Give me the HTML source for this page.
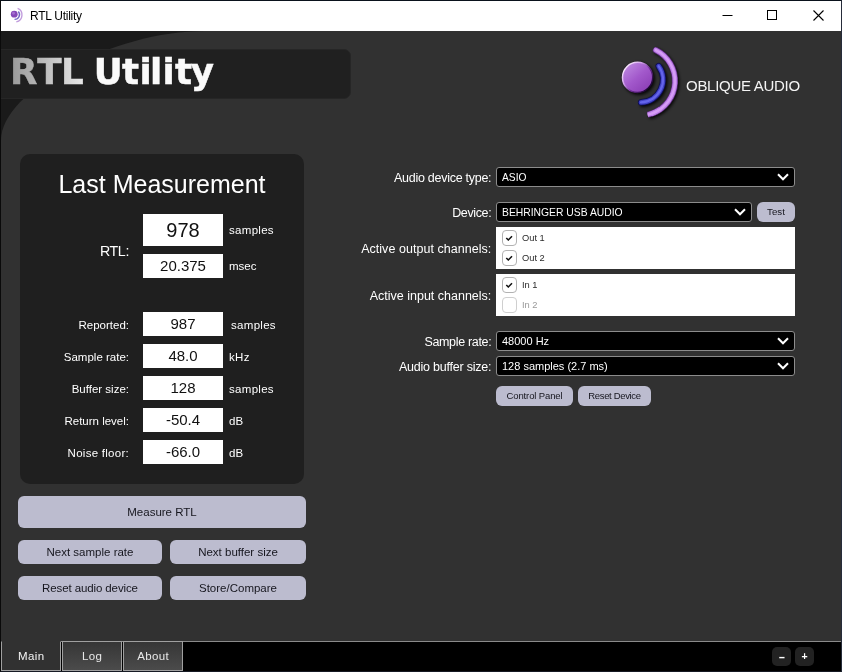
<!DOCTYPE html>
<html>
<head>
<meta charset="utf-8">
<title>RTL Utility</title>
<style>
*{box-sizing:border-box;margin:0;padding:0}
html,body{width:842px;height:672px;overflow:hidden;background:#313131}
body{font-family:"Liberation Sans","DejaVu Sans",sans-serif;color:#fff;position:relative}
.abs{position:absolute}
#titlebar .t,#banner .t,.h,.box,.lab,.unit,.btn,.rl,.combo,.li,.tab,.zb,.txt{will-change:transform}
#frame{position:absolute;left:0;top:0;width:842px;height:672px;border:1px solid #0a0a0a;border-top-color:#0a121c;border-right-color:#262c3a;border-bottom-color:#161a24;z-index:50;pointer-events:none}
#titlebar{position:absolute;left:1px;top:1px;width:840px;height:30px;background:#fff;color:#000}
#titlebar .t{position:absolute;left:29px;top:0;line-height:30px;font-size:12px;color:#000;letter-spacing:-0.26px}
#content{position:absolute;left:1px;top:31px;width:840px;height:610px;background:#1a1a1a;overflow:hidden}
#curve{position:absolute;left:0;top:0}
#banner{position:absolute;left:-10px;top:18px;width:360px;height:50px;background:#202020;border-radius:7px;border:1px solid #262626}
#banner .t{position:absolute;left:20px;top:0;font-family:"DejaVu Sans","Liberation Sans",sans-serif;font-size:35.6px;line-height:50px;font-weight:bold;white-space:nowrap;letter-spacing:-0.85px}
#banner .g{background:linear-gradient(90deg,#9c9c9c,#e6e6e6);-webkit-background-clip:text;background-clip:text;color:transparent}
#panel{position:absolute;left:19px;top:123px;width:284px;height:330px;background:#1f1f1f;border-radius:10px}
.h{position:absolute;left:0;width:284px;text-align:center;top:14px;font-size:25px;line-height:32px;white-space:nowrap}
.box{position:absolute;left:123px;width:80px;height:24px;background:#fff;color:#111;text-align:center;font-size:15px;line-height:24px}
.lab{position:absolute;left:0;width:109px;text-align:right;font-size:11.5px;line-height:24px;white-space:nowrap;margin-top:1px}
.unit{position:absolute;left:209px;font-size:11.5px;line-height:24px;white-space:nowrap;margin-top:1px}
.btn{position:absolute;background:#bcbccf;color:#16161e;border-radius:6px;text-align:center;font-size:11.5px;white-space:nowrap}
.rl{position:absolute;left:300px;width:190.3px;text-align:right;font-size:12.5px;line-height:20px;white-space:nowrap;margin-top:1px}
.combo{position:absolute;left:495px;height:20px;background:#000;border:1px solid #8c8c8c;border-radius:3px;font-size:11px;line-height:18px;padding-left:5px;white-space:nowrap}
.combo svg{position:absolute;right:5.5px;top:4.2px}
.list{position:absolute;left:495px;width:299px;height:42px;background:#fff;color:#2a2a2a;font-size:9.3px}
.cb{position:absolute;left:5.5px;width:15.5px;height:15.5px;margin-top:0.3px;border:1px solid #b2b2b2;border-radius:4px;background:#fff}
.cb svg{position:absolute;left:1.7px;top:1.7px}
.li{position:absolute;left:26px;line-height:16px;white-space:nowrap}
#tabbar{position:absolute;left:1px;top:641px;width:840px;height:30px;background:#000;border-top:1px solid #8a8a8a}
.tab{position:absolute;top:-1px;height:30px;border:1px solid #a0a0a0;text-align:center;font-size:11.5px;line-height:28px;letter-spacing:0.4px;text-indent:0.4px;color:#e8e8e8;background:linear-gradient(#363636,#4b4b4b)}
.zb{position:absolute;top:5px;width:19px;height:19px;border-radius:5px;background:#222;color:#fff;text-align:center;font-size:12px;line-height:18px;font-weight:bold}
</style>
</head>
<body>
<div id="titlebar">
  <svg class="abs" style="left:-1px;top:-1px" width="30" height="30" viewBox="0 0 30 30">
    <g transform="translate(11 7.7) scale(0.207) translate(-622 -46)">
      <path d="M653.98 49.24 A34.5 34.5 0 0 1 647.67 114.75" fill="none" stroke="#b58ad6" stroke-width="6.5" opacity="0.85"/>
      <path d="M657.41 64.64 A22.8 22.8 0 0 1 639.01 102.37" fill="none" stroke="#5a4ab8" stroke-width="7" opacity="0.85"/>
      <circle cx="637.6" cy="77.4" r="16.5" fill="#8548b8"/>
      <circle cx="634" cy="73" r="7" fill="#a56cd0"/>
    </g>
  </svg>
  <div class="t">RTL Utility</div>
  <svg class="abs" style="left:716px;top:-1px" width="124" height="30" viewBox="0 0 124 30">
    <path d="M5.5 15.5h10" stroke="#000" stroke-width="1" fill="none"/>
    <rect x="50.5" y="10.5" width="9" height="9" stroke="#000" stroke-width="1" fill="none"/>
    <path d="M96.5 10.5l10 10M106.5 10.5l-10 10" stroke="#000" stroke-width="1.1" fill="none"/>
  </svg>
</div>
<div id="content">
  <svg id="curve" width="840" height="610" viewBox="1 31 840 610"><path d="M1 140C1 91 113 31 205 31L841 31L841 641L1 641Z" fill="#313131"/></svg>
  <div id="banner"></div>
  <svg id="ttl" class="abs" style="left:-1px;top:-31px;will-change:transform" width="360" height="140" viewBox="0 0 360 140">
    <defs><linearGradient id="tg" gradientUnits="userSpaceOnUse" x1="12" y1="0" x2="84" y2="0"><stop offset="0" stop-color="#9a9a9a"/><stop offset="1" stop-color="#e8e8e8"/></linearGradient></defs>
    <text x="10.1 37.2 61 84 93.7 122 139.4 150.1 162.6 175 190.8" y="84" font-family="DejaVu Sans, Liberation Sans, sans-serif" font-weight="bold" font-size="35.6" fill="#fafafa" stroke="#fafafa" stroke-width="0.5"><tspan fill="url(#tg)" stroke="url(#tg)">RTL</tspan> Utility</text>
  </svg>

  <svg class="abs" style="left:599px;top:5px" width="100" height="90" viewBox="600 36 100 90">
    <defs>
      <linearGradient id="sph" x1="0.15" y1="0.1" x2="0.85" y2="0.9">
        <stop offset="0" stop-color="#bb84de"/>
        <stop offset="0.5" stop-color="#a258cb"/>
        <stop offset="1" stop-color="#8c3fb6"/>
      </linearGradient>
      <linearGradient id="rim" x1="0.12" y1="0.18" x2="0.88" y2="0.82">
        <stop offset="0" stop-color="#f6e2fc"/>
        <stop offset="0.3" stop-color="#cf9de8"/>
        <stop offset="0.62" stop-color="#6d2e94"/>
        <stop offset="1" stop-color="#1e0634"/>
      </linearGradient>
      <filter id="sh" x="-30%" y="-30%" width="170%" height="170%"><feGaussianBlur stdDeviation="1.5"/></filter>
    </defs>
    <g filter="url(#sh)" opacity="0.85" transform="translate(1.4 1.4)">
      <path d="M653.98 49.24 A34.5 34.5 0 0 1 647.67 114.75" fill="none" stroke="#000" stroke-width="6"/>
      <path d="M657.41 64.64 A22.8 22.8 0 0 1 639.01 102.37" fill="none" stroke="#000" stroke-width="6.5"/>
      <circle cx="637.6" cy="77.4" r="16.2" fill="#000"/>
    </g>
    <g stroke-linecap="round" fill="none">
      <path d="M655.89 50.12 A34.5 34.5 0 0 1 652.30 113.42" stroke="#5a2c7a" stroke-width="6.2"/>
      <path d="M660.29 109.26 A34.5 34.5 0 0 1 647.67 114.75" stroke="#5a2c7a" stroke-width="6.2" stroke-linecap="butt"/>
      <path d="M655.89 50.12 A34.5 34.5 0 0 1 652.30 113.42" stroke="#bd7ee6" stroke-width="4.8"/>
      <path d="M660.29 109.26 A34.5 34.5 0 0 1 647.67 114.75" stroke="#bd7ee6" stroke-width="4.8" stroke-linecap="butt"/>
      <path d="M655.89 50.12 A34.5 34.5 0 0 1 652.30 113.42" stroke="#d69cf6" stroke-width="2.4"/>
      <path d="M660.29 109.26 A34.5 34.5 0 0 1 647.67 114.75" stroke="#d69cf6" stroke-width="2.4" stroke-linecap="butt"/>
      <path d="M658.65 66.20 A22.8 22.8 0 0 1 641.00 102.39" stroke="#0e0e56" stroke-width="6.4"/>
      <path d="M658.65 66.20 A22.8 22.8 0 0 1 641.00 102.39" stroke="#4040c4" stroke-width="4.6"/>
      <path d="M658.65 66.20 A22.8 22.8 0 0 1 641.00 102.39" stroke="#6464ea" stroke-width="2.2"/>
    </g>
    <circle cx="637.6" cy="77.4" r="15.1" fill="url(#sph)" stroke="url(#rim)" stroke-width="1.5"/>
  </svg>
  <div class="abs txt" style="left:684.5px;top:45px;font-size:15px;line-height:20px;letter-spacing:-0.28px;white-space:nowrap;color:#f4f4f4">OBLIQUE AUDIO</div>

  <div id="panel">
    <div class="h">Last Measurement</div>
    <div class="lab" style="top:79.5px;font-size:14.2px;line-height:32px;letter-spacing:-0.35px;margin-left:-0.35px">RTL:</div>
    <div class="box" style="top:60px;height:32px;line-height:32px;font-size:20px">978</div>
    <div class="unit" style="top:59px;line-height:32px;letter-spacing:0.3px">samples</div>
    <div class="box" style="top:100px">20.375</div>
    <div class="unit" style="top:99px">msec</div>

    <div class="lab" style="top:158px">Reported:</div>
    <div class="box" style="top:158px">987</div>
    <div class="unit" style="top:158px;left:211px;letter-spacing:0.3px">samples</div>
    <div class="lab" style="top:190px">Sample rate:</div>
    <div class="box" style="top:190px">48.0</div>
    <div class="unit" style="top:190px;letter-spacing:0.3px">kHz</div>
    <div class="lab" style="top:222px">Buffer size:</div>
    <div class="box" style="top:222px">128</div>
    <div class="unit" style="top:222px;letter-spacing:0.3px">samples</div>
    <div class="lab" style="top:254px">Return level:</div>
    <div class="box" style="top:254px">-50.4</div>
    <div class="unit" style="top:254px">dB</div>
    <div class="lab" style="top:286px;letter-spacing:0.27px;margin-left:0.27px">Noise floor:</div>
    <div class="box" style="top:286px">-66.0</div>
    <div class="unit" style="top:286px">dB</div>
  </div>

  <div class="btn" style="left:17px;top:465px;width:288px;height:32px;line-height:32px">Measure RTL</div>
  <div class="btn" style="left:17px;top:509px;width:144px;height:24px;line-height:24px">Next sample rate</div>
  <div class="btn" style="left:169px;top:509px;width:136px;height:24px;line-height:24px">Next buffer size</div>
  <div class="btn" style="left:17px;top:545px;width:144px;height:24px;line-height:24px;letter-spacing:-0.11px">Reset audio device</div>
  <div class="btn" style="left:169px;top:545px;width:136px;height:24px;line-height:24px">Store/Compare</div>

  <div class="rl" style="top:136px;letter-spacing:-0.27px;margin-left:-0.27px">Audio device type:</div>
  <div class="combo" style="top:136px;width:299px"><span style="display:inline-block;transform-origin:0 50%;transform:scaleX(0.93)">ASIO</span><svg width="12" height="10" viewBox="0 0 12 10"><path d="M1 2.200L6 7.300l5-5.100" fill="none" stroke="#fff" stroke-width="2"/></svg></div>
  <div class="rl" style="top:171px;letter-spacing:-0.37px;margin-left:-0.37px">Device:</div>
  <div class="combo" style="top:171px;width:256px"><span style="display:inline-block;transform-origin:0 50%;transform:scaleX(0.94)">BEHRINGER USB AUDIO</span><svg width="12" height="10" viewBox="0 0 12 10"><path d="M1 2.200L6 7.300l5-5.100" fill="none" stroke="#fff" stroke-width="2"/></svg></div>
  <div class="btn" style="left:756px;top:171px;width:38px;height:20px;line-height:20px;font-size:9.7px">Test</div>

  <div class="rl" style="top:207px;letter-spacing:0.04px;margin-left:0.04px">Active output channels:</div>
  <div class="list" style="top:196px">
    <div class="cb" style="top:3px"><svg width="10" height="10" viewBox="0 0 10 10"><path d="M2.300 5l2 2L8 3.300" fill="none" stroke="#111" stroke-width="1.550"/></svg></div><div class="li" style="top:3px">Out 1</div>
    <div class="cb" style="top:23px"><svg width="10" height="10" viewBox="0 0 10 10"><path d="M2.300 5l2 2L8 3.300" fill="none" stroke="#111" stroke-width="1.550"/></svg></div><div class="li" style="top:23px">Out 2</div>
  </div>
  <div class="rl" style="top:254px;letter-spacing:0px">Active input channels:</div>
  <div class="list" style="top:243px">
    <div class="cb" style="top:3px"><svg width="10" height="10" viewBox="0 0 10 10"><path d="M2.300 5l2 2L8 3.300" fill="none" stroke="#111" stroke-width="1.550"/></svg></div><div class="li" style="top:3px">In 1</div>
    <div class="cb" style="top:23px;border-color:#cfcfcf"></div><div class="li" style="top:23px;color:#999">In 2</div>
  </div>

  <div class="rl" style="top:300px;letter-spacing:-0.33px;margin-left:-0.33px">Sample rate:</div>
  <div class="combo" style="top:300px;width:299px">48000 Hz<svg width="12" height="10" viewBox="0 0 12 10"><path d="M1 2.200L6 7.300l5-5.100" fill="none" stroke="#fff" stroke-width="2"/></svg></div>
  <div class="rl" style="top:325px;letter-spacing:-0.22px;margin-left:-0.22px">Audio buffer size:</div>
  <div class="combo" style="top:325px;width:299px">128 samples (2.7 ms)<svg width="12" height="10" viewBox="0 0 12 10"><path d="M1 2.200L6 7.300l5-5.100" fill="none" stroke="#fff" stroke-width="2"/></svg></div>

  <div class="btn" style="left:495px;top:355px;width:77px;height:20px;line-height:20px;font-size:9.5px;letter-spacing:-0.13px">Control Panel</div>
  <div class="btn" style="left:577px;top:355px;width:73px;height:20px;line-height:20px;font-size:9.5px;letter-spacing:-0.34px">Reset Device</div>
</div>
<div id="tabbar">
  <div class="tab" style="left:0px;width:60px;background:#313131;border-top-color:#313131;color:#f4f4f4">Main</div>
  <div class="tab" style="left:61px;width:60px">Log</div>
  <div class="tab" style="left:122px;width:60px">About</div>
  <div class="zb" style="left:771px"><span style="display:inline-block;transform:translateY(0.5px) scale(1.7,0.85)">-</span></div>
  <div class="zb" style="left:794px;font-size:10.5px;line-height:19px">+</div>
</div>
<div id="frame"></div>
</body>
</html>
